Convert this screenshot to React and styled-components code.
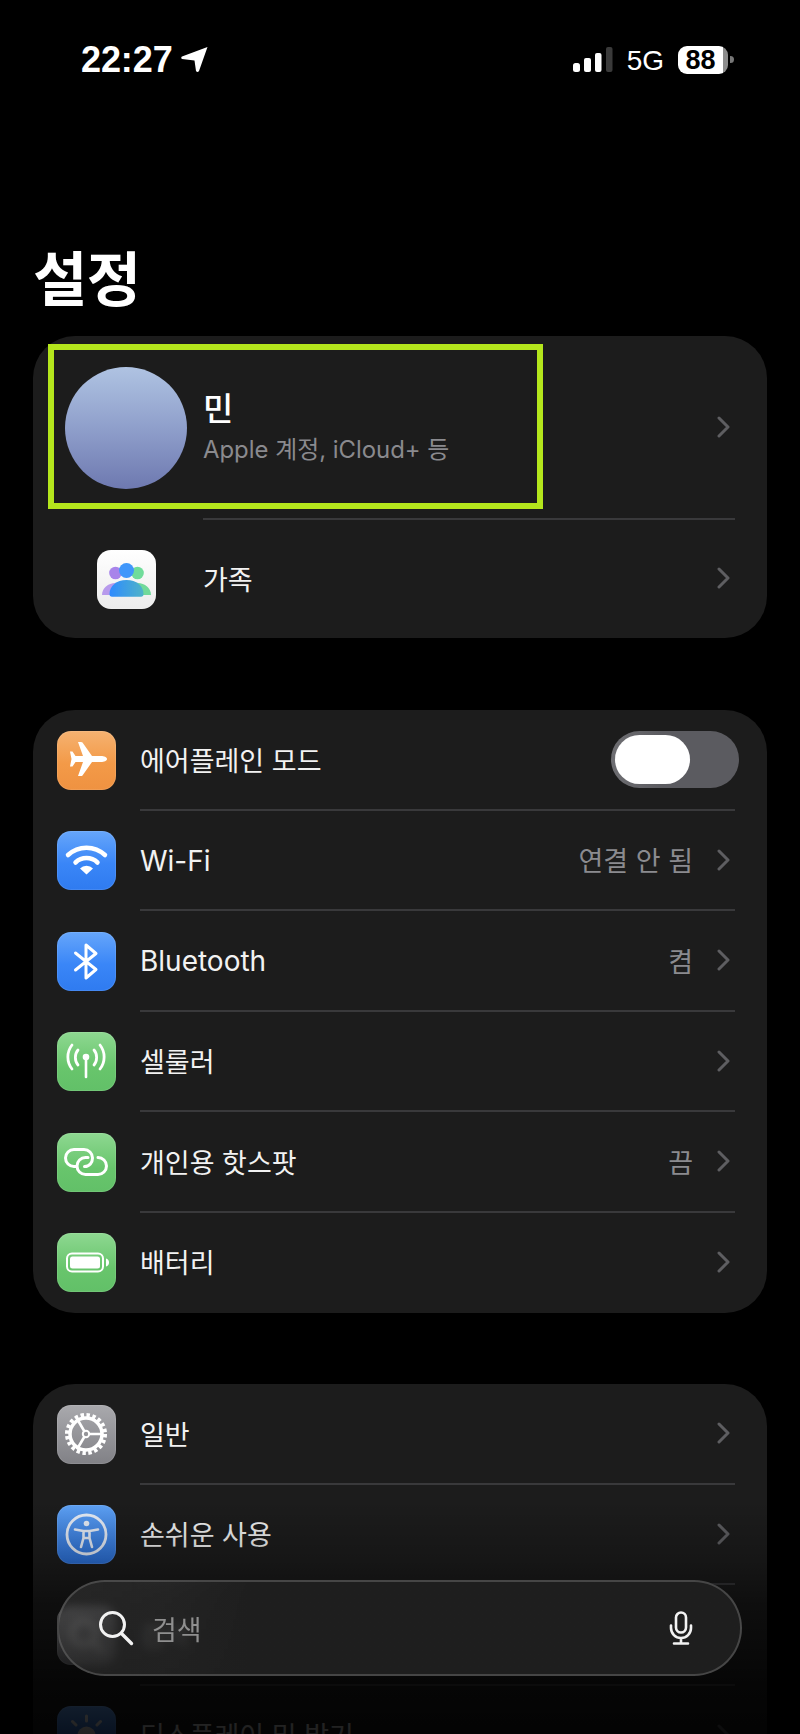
import React from "react";
import styled, { createGlobalStyle } from "styled-components";

const Global = createGlobalStyle`
  html, body { margin: 0; padding: 0; background: #000; }
  body { font-family: Inter, "Noto Sans CJK KR", sans-serif; color: #fff; }
`;

const Page = styled.div`
  position: relative;
  width: 800px;
  height: 1734px;
  overflow: hidden;
  background: #000;
`;

const StatusBar = styled.header`
  display: flex;
  justify-content: space-between;
  align-items: flex-start;
  height: 46px;
  padding: 46px 66px 0 81px;
`;

const TimeGroup = styled.div`
  display: flex;
  align-items: center;
  gap: 8px;
  height: 27px;
`;

const Time = styled.span`
  font-family: "Liberation Sans", sans-serif;
  font-weight: 700;
  font-size: 36px;
  line-height: 27px;
  letter-spacing: -0.1px;
`;

const StatusRight = styled.div`
  display: flex;
  align-items: center;
  height: 27px;
`;

const Network = styled.span`
  font-family: "Liberation Sans", sans-serif;
  font-size: 28px;
  line-height: 27px;
  margin: 0 14px 0 14px;
  padding-top: 2px;
`;

const BatteryBody = styled.div`
  width: 50px;
  height: 28px;
  border-radius: 9px;
  background: linear-gradient(90deg, #fff 0 90%, #8c8c8c 90% 100%);
  color: #000;
  font-family: "Liberation Sans", sans-serif;
  font-weight: 700;
  font-size: 27px;
  line-height: 28px;
  text-align: center;
  padding-right: 5px;
  box-sizing: border-box;
`;

const BatteryTip = styled.div`
  width: 4px;
  height: 7px;
  margin-left: 2px;
  border-radius: 0 4px 4px 0;
  background: #777;
`;

const Title = styled.h1`
  margin: 0;
  padding: 153px 0 0 33px;
  height: 91px;
  font-size: 59px;
  line-height: 70px;
  font-weight: 700;
  letter-spacing: -0.5px;
`;

const Card = styled.section`
  position: relative;
  margin: ${(p) => p.$top}px 33px 0;
  border-radius: 42px;
  background: #1c1c1c;
`;

const Row = styled.div`
  display: flex;
  align-items: stretch;
  padding-left: ${(p) => p.$inset}px;
`;

const Lead = styled.div`
  display: flex;
  align-items: center;
  width: ${(p) => p.$width}px;
  flex: none;
`;

const Content = styled.div`
  flex: 1;
  display: flex;
  align-items: center;
  justify-content: space-between;
  box-sizing: border-box;
  height: ${(p) => p.$height}px;
  margin-right: 32px;
  padding-right: 5px;
  border-bottom: 2px solid ${(p) => (p.$last ? "transparent" : "#39393b")};
`;

const Label = styled.span`
  font-size: ${(p) => (p.$latin ? 28 : 27)}px;
  padding-top: ${(p) => (p.$latin ? 2 : 0)}px;
  font-weight: 400;
  color: #f2f2f2;
  white-space: nowrap;
`;

const Trail = styled.div`
  display: flex;
  align-items: center;
  gap: 24px;
`;

const Value = styled.span`
  font-size: 27px;
  color: #8b8b8f;
  white-space: nowrap;
`;

const Avatar = styled.div`
  width: 122px;
  height: 122px;
  border-radius: 50%;
  background: linear-gradient(180deg, #afc3e2 0%, #8f9fcb 50%, #6e79b0 100%);
`;

const NameBlock = styled.div`
  display: flex;
  flex-direction: column;
  gap: 2px;
`;

const Name = styled.span`
  font-size: 33px;
  line-height: 44px;
  font-weight: 500;
  color: #fff;
`;

const Sub = styled.span`
  font-size: 23.9px;
  line-height: 34px;
  color: #8a8a8e;
`;

const Highlight = styled.div`
  position: absolute;
  left: 15px;
  top: 8px;
  width: 495px;
  height: 165px;
  box-sizing: border-box;
  border: 6px solid #b4e61c;
  pointer-events: none;
`;

const Tile = styled.div`
  width: 59px;
  height: 59px;
  flex: none;
  border-radius: 14px;
  background: ${(p) => p.$bg};
  box-shadow: inset 0 0 0 1px rgba(255, 255, 255, 0.1);
  svg { display: block; }
`;

const Toggle = styled.div`
  width: 128px;
  height: 57px;
  margin-right: -9px;
  margin-top: 1px;
  border-radius: 29px;
  background: linear-gradient(90deg, #6e6e72 0%, #5b5b60 40%);
  padding: 4px;
  box-sizing: border-box;
`;

const Knob = styled.div`
  width: 75px;
  height: 49px;
  border-radius: 25px;
  background: #fff;
`;

const Fade = styled.div`
  position: absolute;
  left: 0;
  right: 0;
  bottom: 0;
  height: 234px;
  background: linear-gradient(180deg, rgba(0,0,0,0) 0%, rgba(0,0,0,.22) 26%, rgba(0,0,0,.5) 45%, rgba(0,0,0,.8) 80%, rgba(0,0,0,.87) 100%);
  pointer-events: none;
`;

const SearchBar = styled.div`
  position: absolute;
  left: 57px;
  right: 58px;
  bottom: 58px;
  height: 96px;
  box-sizing: border-box;
  display: flex;
  align-items: center;
  padding: 0 47px 0 39px;
  border-radius: 48px;
  border: 2px solid rgba(110, 110, 110, 0.5);
  background: linear-gradient(90deg, rgba(60,60,60,.5) 0%, rgba(44,44,44,.72) 16%, rgba(31,31,31,.97) 28%, rgba(31,31,31,.97) 100%);
  backdrop-filter: blur(4px);
`;

const SearchText = styled.span`
  flex: 1;
  margin-left: 18px;
  font-size: 27px;
  color: #8f8f8f;
`;

const Chevron = () => (
  <svg width="13" height="22" viewBox="0 0 13 22" fill="none">
    <path d="M2 2l9 9-9 9" stroke="#5e5e61" strokeWidth="3" strokeLinecap="round" strokeLinejoin="round" />
  </svg>
);

const Glyph = ({ children }) => (
  <svg width="59" height="59" viewBox="0 0 59 59" fill="none">{children}</svg>
);

const stroke = { stroke: "#fff", strokeLinecap: "round", strokeLinejoin: "round", fill: "none" };

const Plane = () => (
  <Glyph>
    <path fill="#fff" d="M50 28c0-2-3-3-6-3h-9L25.500 11.500Q25 11 24 11h-3l5 14h-7.500l-3-4.500H13L14.500 28 13 35.500h2.500l3-4.500H26l-5 14h3q1 0 1.500-.5L35 31h9c3 0 6-1 6-3z" />
  </Glyph>
);

const Wifi = () => (
  <Glyph>
    <path {...stroke} strokeWidth="4.500" d="M11 24a27 27 0 0 1 37 0" />
    <path {...stroke} strokeWidth="4.500" d="M18.500 31.500a16 16 0 0 1 22 0" />
    <path fill="#fff" d="M29.500 43.500l-6.500-6a9 9 0 0 1 13 0z" />
  </Glyph>
);

const Bluetooth = () => (
  <Glyph>
    <path {...stroke} strokeWidth="3" d="M18.500 21L39 37.500 29 46V13l10 8.500L18.500 38" />
  </Glyph>
);

const Cell = () => (
  <Glyph>
    <circle cx="29" cy="25" r="3.300" fill="#fff" />
    <path {...stroke} strokeWidth="2.600" d="M29 26v19" />
    <path {...stroke} strokeWidth="2.800" d="M15 13c-5.500 7-5.500 17 0 24M43 13c5.500 7 5.500 17 0 24M21 18c-3.500 4-3.500 11 0 15M37 18c3.500 4 3.500 11 0 15" />
  </Glyph>
);

const Link = () => (
  <Glyph>
    <path {...stroke} strokeWidth="3" d="M19 33.500h-2a8.500 8.500 0 0 1 0-17h10a8.500 8.500 0 0 1 8.500 8.500c0 4.500-3 8.500-8 8.500" />
    <path {...stroke} strokeWidth="3" d="M41 24.500a8.500 8.500 0 0 1 0 17H28.500a8.500 8.500 0 0 1 0-17H31" />
  </Glyph>
);

const Batt = () => (
  <Glyph>
    <rect x="10" y="20.500" width="36" height="18" rx="5" stroke="#fff" strokeWidth="2" />
    <rect x="13" y="23.500" width="30" height="12" rx="2.500" fill="#fff" />
    <path fill="#fff" d="M49 25.500c2 .5 3 2 3 4s-1 3.500-3 4z" />
  </Glyph>
);

const Gear = () => (
  <Glyph>
    <circle cx="29" cy="29" r="18.800" stroke="#fff" strokeWidth="4.500" strokeDasharray="3.400 2.500" />
    <circle cx="29" cy="29" r="16" stroke="#fff" strokeWidth="3.500" />
    <circle cx="29" cy="29" r="3.200" stroke="#fff" strokeWidth="2" />
    <path {...stroke} strokeWidth="2.600" d="M32.500 29H45M27.200 26L20.500 14.500M27.200 32L20.500 43.500" />
  </Glyph>
);

const Access = () => (
  <Glyph>
    <circle cx="29.500" cy="29.500" r="19.500" stroke="#e8eef8" strokeWidth="2.800" />
    <circle cx="29.500" cy="18.500" r="2.800" fill="#e8eef8" />
    <path {...stroke} stroke="#e8eef8" strokeWidth="2.600" d="M18 24.500l8.500 1.500v7l-2.500 9M41 24.500L32.500 26v7l2.500 9M26.500 26h6M26.500 33h6" />
  </Glyph>
);

const SearchGhost = () => (
  <Glyph>
    <circle cx="27" cy="27" r="12" stroke="#fff" strokeWidth="4" />
    <path {...stroke} strokeWidth="4" d="M36 36l9 9" />
  </Glyph>
);

const Sun = () => (
  <Glyph>
    <circle cx="29.500" cy="29.500" r="9" fill="#fff" />
    <path {...stroke} strokeWidth="3" d="M29.500 10v5M29.500 44v5M10 29.500h5M44 29.500h5M15.500 15.500l3.500 3.500M40 40l3.500 3.500M43.500 15.500L40 19M19 40l-3.500 3.500" />
  </Glyph>
);

const Family = () => (
  <Glyph>
    <defs>
      <linearGradient id="famBlue" x1="0" y1="0" x2="1" y2="0">
        <stop offset="0" stopColor="#2e8bff" />
        <stop offset="1" stopColor="#4fb3c8" />
      </linearGradient>
      <filter id="famSoft"><feGaussianBlur stdDeviation="0.4" /></filter>
    </defs>
    <g filter="url(#famSoft)">
      <circle cx="18.500" cy="23" r="6.300" fill="#a884ea" />
      <path fill="#b79aec" d="M5 45c0-7 6-12 13.500-12 3 0 6 1 8 2l-6 10z" />
      <circle cx="40.500" cy="23" r="6.300" fill="#6fdc9a" />
      <path fill="#6fd99a" d="M54 45c0-7-6-12-13.500-12-3 0-6 1-8 2l6 10z" />
      <circle cx="29.500" cy="20.500" r="7.500" fill="#3f97fb" />
      <path fill="url(#famBlue)" d="M12.500 44c0-8 7-14 17-14s17 6 17 14q0 2.800-2.500 2.800H15Q12.500 46.800 12.500 44z" />
    </g>
  </Glyph>
);

const blue = "linear-gradient(180deg,#66a6fb 0%,#3a86f7 55%,#2f7bf0 100%)";
const green = "linear-gradient(180deg,#8ed891 0%,#68c56c 60%,#62c068 100%)";

const rowsNet = [
  { key: "air", label: "에어플레인 모드", bg: "linear-gradient(180deg,#f5b271 0%,#f39a48 55%,#ef9241 100%)", icon: <Plane />, toggle: true },
  { key: "wifi", label: "Wi-Fi", latin: true, value: "연결 안 됨", bg: blue, icon: <Wifi /> },
  { key: "bt", label: "Bluetooth", latin: true, value: "켬", bg: blue, icon: <Bluetooth /> },
  { key: "cell", label: "셀룰러", bg: green, icon: <Cell /> },
  { key: "hot", label: "개인용 핫스팟", value: "끔", bg: green, icon: <Link /> },
  { key: "bat", label: "배터리", bg: green, icon: <Batt /> },
];

const rowsGen = [
  { key: "gen", label: "일반", bg: "linear-gradient(180deg,#a9a9ad 0%,#818186 100%)", icon: <Gear /> },
  { key: "acc", label: "손쉬운 사용", bg: "linear-gradient(180deg,#5ea2f6 0%,#2a6fd8 100%)", icon: <Access /> },
  { key: "sea", label: "검색", bg: "linear-gradient(180deg,#9a9a9e 0%,#707074 100%)", icon: <SearchGhost /> },
  { key: "dis", label: "디스플레이 및 밝기", bg: blue, icon: <Sun /> },
];

const SettingRow = ({ item, last }) => (
  <Row $inset={24}>
    <Lead $width={83}>
      <Tile $bg={item.bg}>{item.icon}</Tile>
    </Lead>
    <Content $height={100.5} $last={last}>
      <Label $latin={item.latin}>{item.label}</Label>
      {item.toggle ? (
        <Toggle><Knob /></Toggle>
      ) : (
        <Trail>
          {item.value && <Value>{item.value}</Value>}
          <Chevron />
        </Trail>
      )}
    </Content>
  </Row>
);

export default function App() {
  return (
    <Page>
      <Global />
      <StatusBar>
        <TimeGroup>
          <Time>22:27</Time>
          <svg width="27" height="27" viewBox="0 0 27 27">
            <path fill="#fff" d="M26.500 1L18 25q-1.500 2-3 0l-1.500-10.500L1 13q-1.500-1.500 0-2.500z" />
          </svg>
        </TimeGroup>
        <StatusRight>
          <svg width="40" height="26" viewBox="0 0 40 26">
            <rect x="0" y="16" width="7" height="9" rx="2.500" fill="#fff" />
            <rect x="11" y="11" width="7" height="14" rx="2" fill="#fff" />
            <rect x="22" y="6" width="6.500" height="19" rx="2" fill="#fff" />
            <rect x="33" y="0" width="6.500" height="25" rx="2" fill="#3a3a3a" />
          </svg>
          <Network>5G</Network>
          <BatteryBody>88</BatteryBody>
          <BatteryTip />
        </StatusRight>
      </StatusBar>

      <Title>설정</Title>

      <Card $top={0}>
        <Highlight />
        <Row $inset={32}>
          <Lead $width={138}><Avatar /></Lead>
          <Content $height={184}>
            <NameBlock>
              <Name>민</Name>
              <Sub>Apple 계정, iCloud+ 등</Sub>
            </NameBlock>
            <Trail><Chevron /></Trail>
          </Content>
        </Row>
        <Row $inset={64}>
          <Lead $width={106}>
            <Tile $bg="linear-gradient(180deg,#ffffff 0%,#ececec 100%)"><Family /></Tile>
          </Lead>
          <Content $height={118} $last>
            <Label>가족</Label>
            <Trail><Chevron /></Trail>
          </Content>
        </Row>
      </Card>

      <Card $top={72}>
        {rowsNet.map((r, i) => (
          <SettingRow key={r.key} item={r} last={i === rowsNet.length - 1} />
        ))}
      </Card>

      <Card $top={71}>
        {rowsGen.map((r) => (
          <SettingRow key={r.key} item={r} />
        ))}
      </Card>

      <Fade />

      <SearchBar>
        <svg width="36" height="36" viewBox="0 0 36 36" fill="none">
          <circle cx="14.500" cy="14.500" r="12" stroke="#f2f2f2" strokeWidth="3" />
          <path d="M23.500 23.500l10 10" stroke="#f2f2f2" strokeWidth="3.400" strokeLinecap="round" />
        </svg>
        <SearchText>검색</SearchText>
        <svg width="24" height="34" viewBox="0 0 24 34" fill="none">
          <rect x="7" y="1.500" width="10" height="20" rx="5" stroke="#f2f2f2" strokeWidth="2.600" />
          <path d="M2 14.500v2.500a10 10 0 0 0 20 0v-2.500M12 27v5M5 32.500h14" stroke="#f2f2f2" strokeWidth="2.600" strokeLinecap="round" />
        </svg>
      </SearchBar>
    </Page>
  );
}
